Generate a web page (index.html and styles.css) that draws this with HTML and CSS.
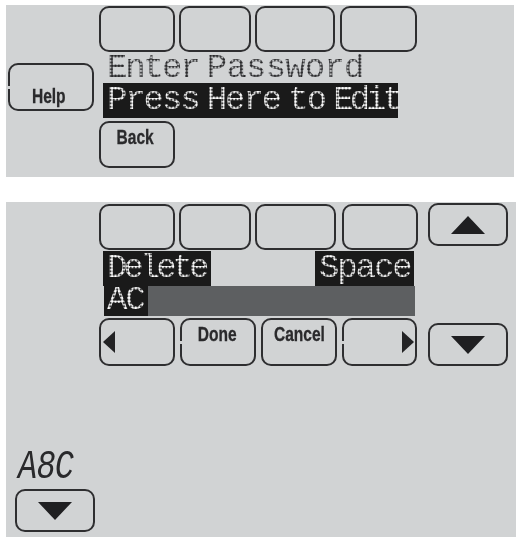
FILE: index.html
```html
<!DOCTYPE html>
<html lang="en">
<head>
<meta charset="utf-8">
<title>Enter Password</title>
<link rel="stylesheet" href="styles.css">
</head>
<body>
<section class="panel panel-login">
  <button class="key key-help notch"><span class="label">Help</span></button>
  <div class="main">
    <div class="keys">
      <button class="key w76"></button>
      <button class="key w72"></button>
      <button class="key w80"></button>
      <button class="key w77 ml1"></button>
    </div>
    <div class="line line-plain"><span class="dots dots-dark">Enter <span class="word-wide">Password</span></span></div>
    <div class="line line-bar"><span class="dots dots-light">Press Here to <span class="word-tight">Edit</span></span></div>
    <button class="key w76 key-back"><span class="label">Back</span></button>
  </div>
</section>

<section class="panel panel-edit">
  <div class="edit-top">
    <div class="main main-edit">
      <div class="keys">
        <button class="key w76"></button>
        <button class="key w72"></button>
        <button class="key w81"></button>
        <button class="key w76 ml2"></button>
      </div>
      <div class="actions">
        <div class="bar-word"><span class="dots dots-light word-tight">Delete</span></div>
        <div class="bar-word bar-space"><span class="dots dots-light">Space</span></div>
      </div>
      <div class="entry">
        <div class="entry-text"><span class="dots dots-light">AC</span></div>
      </div>
      <div class="keys keys-bottom">
        <button class="key w76 key-side">
          <svg class="tri-side" viewBox="0 0 12 22"><path d="M0 11 12 0V22Z"/></svg>
        </button>
        <button class="key w76 key-done notch"><span class="label">Done</span></button>
        <button class="key w76"><span class="label">Cancel</span></button>
        <button class="key w75 key-side key-side-right notch">
          <svg class="tri-side" viewBox="0 0 12 22"><path d="M12 11 0 0V22Z"/></svg>
        </button>
      </div>
    </div>
    <div class="scroll">
      <button class="key key-arrow">
        <svg class="tri" viewBox="0 0 34 18"><path d="M17 0 34 18H0Z"/></svg>
      </button>
      <button class="key key-arrow">
        <svg class="tri" viewBox="0 0 34 18"><path d="M17 18 34 0H0Z"/></svg>
      </button>
    </div>
  </div>
  <div class="mode">
    <div class="mode-text">A8C</div>
    <button class="key key-arrow">
      <svg class="tri" viewBox="0 0 34 18"><path d="M17 18 34 0H0Z"/></svg>
    </button>
  </div>
</section>
</body>
</html>
```

FILE: styles.css
```css
* { box-sizing: border-box; }

body {
  margin: 0;
  background: #fff;
  font-family: "Liberation Sans", sans-serif;
}

.panel {
  background: #d1d3d4;
  margin-left: 6px;
}

.panel-login {
  width: 508px;
  height: 172px;
  margin-top: 5px;
  display: flex;
  align-items: flex-start;
}

.panel-edit {
  width: 510px;
  height: 335px;
  margin-top: 25px;
}

.key {
  position: relative;
  display: flex;
  justify-content: center;
  flex: none;
  height: 46px;
  padding: 0;
  background: transparent;
  border: 2.5px solid #2e2e30;
  border-radius: 10px;
}

.notch::before {
  content: "";
  position: absolute;
  left: -3px;
  top: 21px;
  width: 4px;
  height: 3px;
  background: #d1d3d4;
}

.w72 { width: 72px; }
.w75 { width: 75px; }
.w76 { width: 76px; }
.w77 { width: 77px; }
.w80 { width: 80px; }
.w81 { width: 81px; }
.ml1 { margin-left: 1px; }
.ml2 { margin-left: 2px; }

.label {
  display: inline-block;
  font-family: "Liberation Sans", sans-serif;
  font-weight: 700;
  font-size: 21px;
  line-height: 22px;
  color: #2a2a2c;
  -webkit-text-stroke: 0.3px #2a2a2c;
  transform: scaleX(0.74);
}

.key-help {
  width: 86px;
  height: 48px;
  margin: 58px 0 0 2px;
  align-items: flex-end;
  padding: 0 5px 2px 0;
}

.main {
  margin: 1px 0 0 5px;
}

.keys {
  display: flex;
  gap: 4px;
}

.line {
  margin-left: 4px;
  padding-left: 4px;
}

.line-plain {
  height: 29px;
  margin-top: 2px;
}

.line-bar {
  width: 295px;
  height: 35px;
  background: #1a1a1a;
}

.key-back {
  height: 47px;
  margin-top: 3px;
  padding: 3px 4px 0 0;
}

.dots {
  display: inline-block;
  padding-right: 6px;
  font-family: "Liberation Mono", monospace;
  font-size: 34px;
  line-height: 29px;
  letter-spacing: -2.1px;
  word-spacing: -10px;
  white-space: pre;
  color: transparent;
  background-size: 3.4px 3.4px;
  -webkit-background-clip: text;
  background-clip: text;
}

.word-wide { letter-spacing: -0.8px; }
.word-tight { letter-spacing: -4px; }

.dots-dark {
  background-image: radial-gradient(circle, #28282a 1.2px, rgba(40, 40, 42, 0.15) 1.7px);
}

.dots-light {
  background-image: radial-gradient(circle, #fff 1.2px, rgba(255, 255, 255, 0.15) 1.7px);
}

.line-bar .dots,
.bar-word .dots { line-height: 35px; }

.main-edit {
  margin: 2px 0 0 93px;
}

.edit-top {
  display: flex;
  align-items: flex-start;
}

.actions {
  display: flex;
  justify-content: space-between;
  width: 311px;
  margin: 1px 0 0 4px;
}

.bar-word {
  width: 108px;
  height: 35px;
  padding-left: 4px;
  background: #1a1a1a;
}

.bar-space {
  width: 99px;
}

.entry {
  width: 311px;
  height: 30px;
  margin-left: 5px;
  background: #5d5f61;
}

.entry-text {
  width: 44px;
  height: 30px;
  padding-left: 3px;
  background: #1a1a1a;
}

.keys-bottom {
  gap: 5px;
  margin-top: 2px;
}

.keys-bottom .key {
  height: 48px;
  padding-top: 3px;
}

.keys-bottom .key-done {
  padding-right: 2px;
}

.keys-bottom .key-side {
  padding: 0 0 0 2px;
  justify-content: flex-start;
  align-items: center;
}

.keys-bottom .key-side-right {
  padding: 0 1px 0 0;
  justify-content: flex-end;
}

.tri-side {
  display: block;
  width: 12px;
  height: 22px;
  fill: #232325;
}

.scroll {
  display: flex;
  flex-direction: column;
  justify-content: space-between;
  height: 163px;
  margin: 1px 0 0 10px;
}

.key-arrow {
  width: 80px;
  height: 43px;
  align-items: center;
}

.tri {
  display: block;
  width: 34px;
  height: 18px;
  fill: #1f1f21;
}

.mode {
  margin: 85px 0 0 9px;
}

.mode-text {
  width: 80px;
  height: 34px;
  margin-left: 3px;
  font-family: "Liberation Mono", monospace;
  font-style: italic;
  font-size: 40px;
  line-height: 34px;
  letter-spacing: -1px;
  color: #29292b;
  white-space: pre;
  transform: scaleX(0.8);
  transform-origin: left center;
}

.mode .key-arrow { margin-top: 4px; }
```
